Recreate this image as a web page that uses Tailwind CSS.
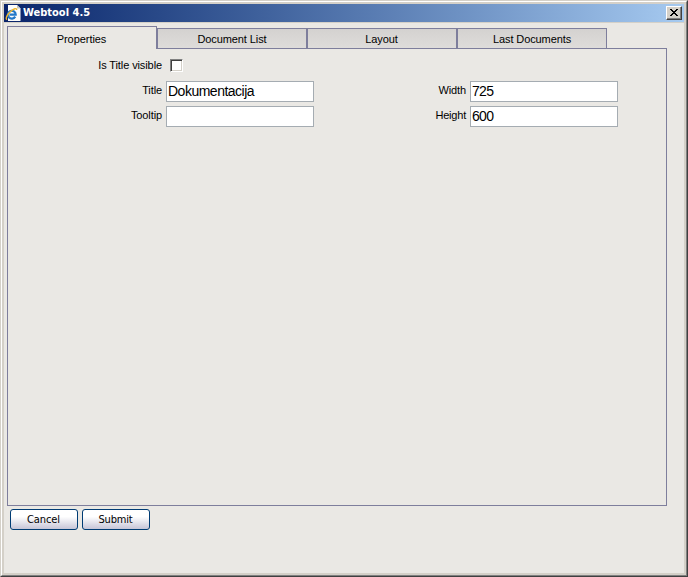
<!DOCTYPE html>
<html lang="en">
<head>
<meta charset="utf-8">
<title>Webtool 4.5</title>
<script src="https://cdn.jsdelivr.net/npm/@tailwindcss/browser@4"></script>
</head>
<body class="w-[688px] h-[577px] overflow-hidden bg-[#d4d0c8] font-['Liberation_Sans',Arial,sans-serif] text-[11px] leading-[13px] tracking-[-0.1px] text-black">
<div class="w-[688px] h-[577px] border-t border-l border-t-[#d4d0c8] border-l-[#d4d0c8] border-r border-b border-r-[#404040] border-b-[#404040]">
<div class="h-full border-t border-l border-t-white border-l-white border-r border-b border-r-[#808080] border-b-[#808080]">
<div class="h-full border-2 border-[#d4d0c8] flex flex-col bg-[#eae8e4]">
  <header class="h-[18px] shrink-0 flex items-center bg-linear-to-r from-[#0a246a] to-[#a6caf0] pl-[1px] pr-[2px]">
    <svg class="w-4 h-4 shrink-0" viewBox="0 0 16 16">
      <path d="M3 0h9l3.5 3.5V16H3z" fill="#fcfcfa"/>
      <path d="M12 0v3.500h3.500z" fill="#c9c6b8"/>
      <path d="M10.200 11.600A3.900 3.900 0 1 1 10.700 9.600H4.500" fill="none" stroke="#2378c8" stroke-width="2.200"/>
      <path d="M2 14.600C.2 13.800 2 9.800 5.200 6.800 8.400 3.600 12 2.400 11.600 5" fill="none" stroke="#efb52c" stroke-width="1.400"/>
    </svg>
    <h1 class="ml-[2px] font-['DejaVu_Sans_Condensed','DejaVu_Sans',sans-serif] font-bold text-[11px] tracking-normal text-white whitespace-nowrap leading-[14px]">Webtool 4.5</h1>
    <button aria-label="Close" class="ml-auto w-4 h-[14px] bg-[#d4d0c8] border border-t-white border-l-white border-r-[#404040] border-b-[#404040] shadow-[inset_-1px_-1px_#808080] flex justify-center pt-[2px]">
      <svg class="w-2 h-[7px]" viewBox="0 0 8 7" shape-rendering="crispEdges"><path d="M0 0h2v1h1v1h2v-1h1v-1h2v1h-1v1h-1v1h-1v1h1v1h1v1h1v1h-2v-1h-1v-1h-2v1h-1v1h-2v-1h1v-1h1v-1h1v-1h-1v-1h-1v-1h-1z"/></svg>
    </button>
  </header>
  <main class="flex-1 border-t border-[#d4d0c8] pt-[3px] pl-[3px] flex flex-col">
    <nav class="relative z-10 flex items-end h-[23px] -mb-px text-center">
      <div class="w-[150px] h-[23px] border border-b-0 border-[#7e7e9c] bg-[#eae8e4] pt-[6px] tracking-[-0.05px] pr-px">Properties</div>
      <div class="w-[150px] h-[21px] border border-[#7e7e9c] bg-linear-to-b from-[#d4d2d0] to-[#dedcda] pt-[4px]">Document List</div>
      <div class="w-[150px] h-[21px] border border-[#7e7e9c] bg-linear-to-b from-[#d4d2d0] to-[#dedcda] pt-[4px] pr-px">Layout</div>
      <div class="w-[150px] h-[21px] border border-[#7e7e9c] bg-linear-to-b from-[#d4d2d0] to-[#dedcda] pt-[4px]">Last Documents</div>
    </nav>
    <section class="w-[660px] h-[458px] border border-[#7e7e9c] pt-[10px]">
      <div class="flex h-[22px]">
        <label class="w-[154px] text-right whitespace-nowrap">Is Title visible</label>
        <span class="ml-[8px] w-[13px] h-[13px] bg-white border border-t-[#808080] border-l-[#808080] border-r-white border-b-white shadow-[inset_1px_1px_#404040,inset_-1px_-1px_#d4d0c8]"></span>
      </div>
      <div class="flex h-[25px]">
        <label class="w-[154px] pt-[3px] text-right">Title</label>
        <div class="ml-1 w-[148px] h-[21px] bg-white border border-[#a5acb2] pl-px text-[14px] tracking-[-0.5px] leading-[19px]">Dokumentacija</div>
        <label class="w-[152px] pt-[3px] text-right">Width</label>
        <div class="ml-1 w-[148px] h-[21px] bg-white border border-[#a5acb2] pl-px text-[14px] tracking-[-0.7px] leading-[19px]">725</div>
      </div>
      <div class="flex h-[25px]">
        <label class="w-[154px] pt-[3px] text-right">Tooltip</label>
        <div class="ml-1 w-[148px] h-[21px] bg-white border border-[#a5acb2]"></div>
        <label class="w-[152px] pt-[3px] text-right tracking-[-0.2px]">Height</label>
        <div class="ml-1 w-[148px] h-[21px] bg-white border border-[#a5acb2] pl-px text-[14px] tracking-[-0.7px] leading-[19px]">600</div>
      </div>
    </section>
    <footer class="flex gap-1 pl-[3px] pt-[3px] font-['DejaVu_Sans_Condensed','DejaVu_Sans',sans-serif]">
      <button class="w-[68px] h-[21px] rounded-[3px] border border-[#003c74] bg-linear-to-b from-white from-35% to-[#c6c5d7] text-[11px] tracking-[-0.1px] leading-[20px] flex justify-center pr-px">Cancel</button>
      <button class="w-[68px] h-[21px] rounded-[3px] border border-[#003c74] bg-linear-to-b from-white from-35% to-[#c6c5d7] text-[11px] tracking-[-0.2px] leading-[20px] flex justify-center pr-px">Submit</button>
    </footer>
  </main>
</div>
</div>
</div>
</body>
</html>
